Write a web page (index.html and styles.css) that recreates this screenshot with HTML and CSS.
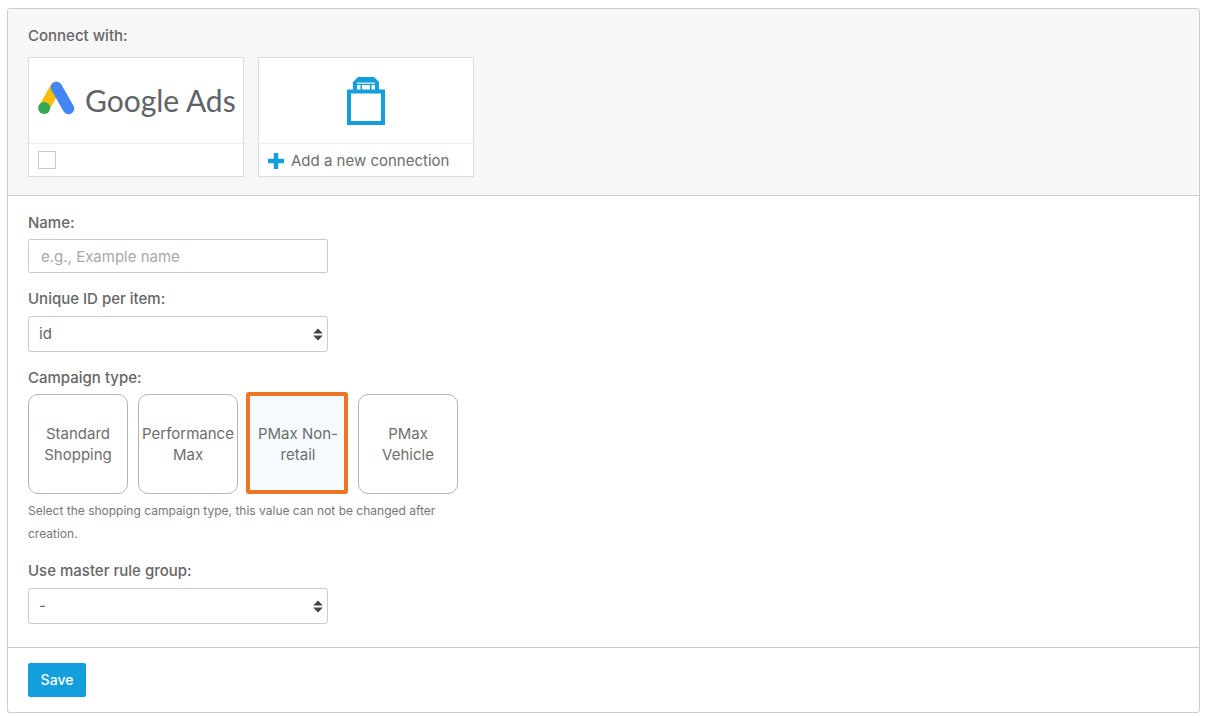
FILE: index.html
```html
<!DOCTYPE html>
<html lang="en">
<head>
<meta charset="utf-8">
<title>Connect</title>
<link rel="stylesheet" href="styles.css">
</head>
<body>
<form class="card">
  <section class="connect">
    <div class="label connect-label">Connect with:</div>
    <div class="tiles">
      <div class="tile">
        <div class="tile-main logo-main">
          <svg class="ads-mark" width="37" height="34" viewBox="0 0 37 34">
            <path d="M6 27 L18 6" stroke="#fbbc04" stroke-width="11" stroke-linecap="round" fill="none"/>
            <path d="M18.500 6.500 L30.500 27.500" stroke="#4285f4" stroke-width="11.500" stroke-linecap="round" fill="none"/>
            <circle cx="6.200" cy="27" r="6" fill="#34a853"/>
          </svg>
          <span class="ads-text">Google Ads</span>
        </div>
        <div class="tile-foot"><span class="checkbox"></span></div>
      </div>
      <div class="tile">
        <div class="tile-main bag-main">
          <svg width="38" height="48" viewBox="0 0 38 48">
            <path d="M6 14 V5 L11 0 H27 L32 5 V14 Z" fill="#149fdc"/>
            <rect x="10" y="5.500" width="18" height="1.500" fill="#bfe4f6"/>
            <rect x="10" y="8" width="18" height="5" fill="#fff"/>
            <rect x="13.500" y="8" width="1.500" height="5" fill="#149fdc"/>
            <rect x="23" y="8" width="1.500" height="5" fill="#149fdc"/>
            <path d="M2 14.500 H36 V46 H2 Z" fill="#fff" stroke="#149fdc" stroke-width="4"/>
          </svg>
        </div>
        <div class="tile-foot">
          <svg class="plus" width="16" height="16" viewBox="0 0 16 16"><path d="M8 0 V16 M0 8 H16" stroke="#149fdc" stroke-width="4.500" fill="none"/></svg>
          <span class="add-text">Add a new connection</span>
        </div>
      </div>
    </div>
  </section>
  <section class="fields">
    <label class="label" for="name">Name:</label>
    <input class="input" id="name" type="text" placeholder="e.g., Example name">
    <label class="label" for="uid">Unique ID per item:</label>
    <div class="select" id="uid"><span>id</span>
      <svg width="10" height="13" viewBox="0 0 10 13"><path d="M5 0.500 L9.800 5.500 H0.200 Z M5 12.500 L0.200 7.500 H9.800 Z" fill="#444"/></svg>
    </div>
    <div class="label">Campaign type:</div>
    <div class="types">
      <div class="type">Standard Shopping</div>
      <div class="type">Performance Max</div>
      <div class="type selected">PMax Non-retail</div>
      <div class="type">PMax Vehicle</div>
    </div>
    <p class="help">Select the shopping campaign type, this value can not be changed after creation.</p>
    <div class="label">Use master rule group:</div>
    <div class="select"><span>-</span>
      <svg width="10" height="13" viewBox="0 0 10 13"><path d="M5 0.500 L9.800 5.500 H0.200 Z M5 12.500 L0.200 7.500 H9.800 Z" fill="#444"/></svg>
    </div>
  </section>
  <section class="actions">
    <button class="save" type="button">Save</button>
  </section>
</form>
</body>
</html>
```
FILE: styles.css
```css
* { box-sizing: border-box; }
html, body { height: 100%; }
body {
  margin: 0;
  padding: 8px 5px 0 7px;
  background: #fff;
  font-family: Inter, "Liberation Sans", sans-serif;
  font-size: 15px;
  line-height: 20px;
  color: #666;
}
.card {
  width: 1193px;
  height: 705px;
  border: 1px solid #ccc;
  border-radius: 3px;
  display: flex;
  flex-direction: column;
}
.connect {
  height: 187px;
  padding: 17px 20px 0;
  background: #f7f7f7;
  border-bottom: 1px solid #ccc;
  border-radius: 3px 3px 0 0;
}
.label { display: block; font-weight: 500; color: #666; line-height: 20px; }
.connect-label { margin-bottom: 11px; }
.tiles { display: flex; gap: 14px; }
.tile {
  width: 216px;
  height: 120px;
  background: #fff;
  border: 1px solid #ddd;
  display: flex;
  flex-direction: column;
}
.tile-main { height: 86px; border-bottom: 1px solid #eee; display: flex; align-items: center; }
.logo-main { padding: 0 0 0 9px; gap: 10px; }
.ads-mark { margin-bottom: 6px; flex: none; }
.ads-text {
  font-family: Lato, sans-serif;
  font-size: 30px;
  color: #5f6368;
  line-height: 34px;
  white-space: nowrap;
  margin-bottom: 1px;
}
.bag-main { justify-content: center; }
.tile-foot { flex: 1; display: flex; align-items: center; padding: 1px 9px 0; gap: 7px; }
.checkbox { width: 18px; height: 18px; border: 1px solid #ccc; background: #fff; margin-top: -1px; }
.plus { flex: none; }
.add-text { color: #6e6e6e; }
.fields { flex: 1; padding: 17px 20px 0; }
.input {
  display: block;
  width: 300px;
  height: 34px;
  margin: 6px 0 16px;
  padding: 0 12px;
  border: 1px solid #ccc;
  border-radius: 2px;
  font: inherit;
  color: #666;
  outline: none;
}
.input::placeholder { color: #a8a8a8; opacity: 1; }
.select {
  width: 300px;
  height: 36px;
  margin: 7px 0 16px;
  padding: 0 4px 0 10px;
  border: 1px solid #ccc;
  border-radius: 3px;
  background: #fff;
  display: flex;
  align-items: center;
  justify-content: space-between;
}
.types { display: flex; gap: 10px; margin-top: 6px; }
.type {
  position: relative;
  width: 100px;
  height: 100px;
  padding: 0 3px;
  border: 1px solid #b4b4bb;
  border-radius: 10px;
  display: flex;
  align-items: center;
  justify-content: center;
  text-align: center;
  line-height: 21px;
  color: #6e6e6e;
}
.type.selected {
  background: #f4fafe;
  border-radius: 3px;
  padding: 0 6px;
}
.type.selected::after {
  content: "";
  position: absolute;
  top: -3px;
  left: -3px;
  right: -1px;
  bottom: -1px;
  border: 4px solid #ee7623;
  border-radius: 3px;
}
.help {
  width: 430px;
  margin: 5px 0 16px;
  font-size: 12px;
  line-height: 23px;
  color: #777;
}
.actions { height: 65px; border-top: 1px solid #ccc; padding: 15px 20px 0; }
.save {
  width: 58px;
  height: 34px;
  border: 1px solid #149fdc;
  border-radius: 2px;
  background: #149fdc;
  color: #fff;
  font: 500 14px/20px Inter, sans-serif;
  padding: 0;
}
```
